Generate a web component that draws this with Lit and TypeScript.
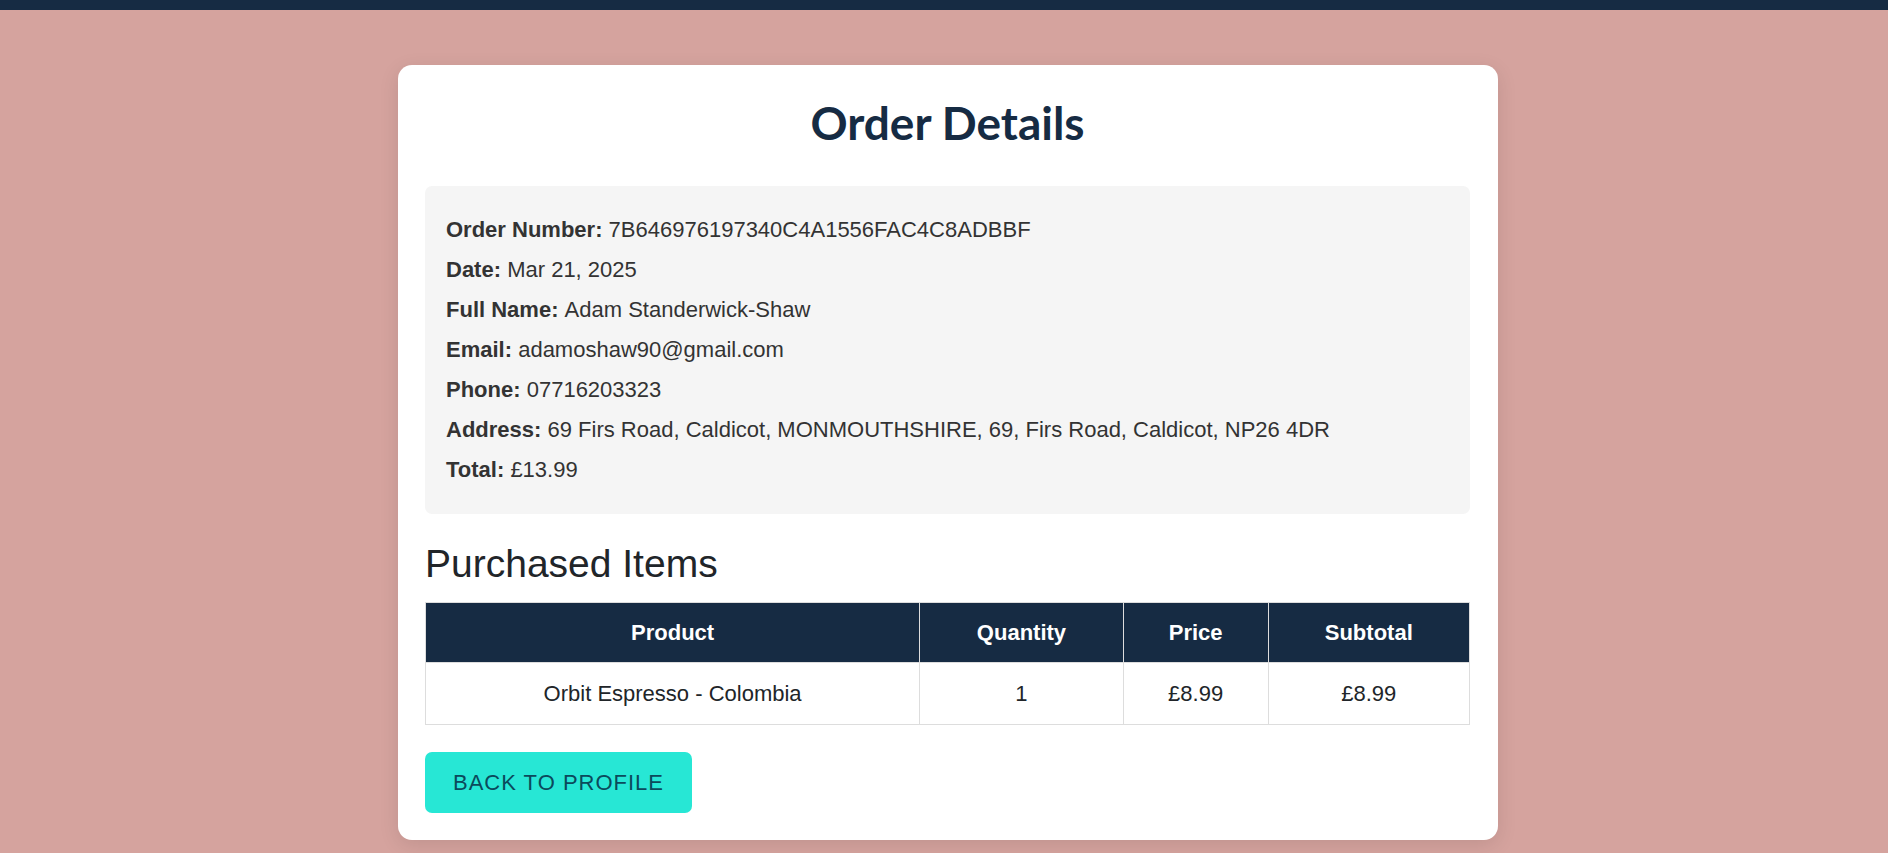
import { LitElement, html, css } from "lit";
import { customElement, property } from "lit/decorators.js";

interface Item {
  product: string;
  quantity: number;
  price: string;
  subtotal: string;
}

@customElement("order-summary")
class OrderSummary extends LitElement {
  @property({ attribute: false }) fields: [string, string][] = [];

  static styles = css`
    :host {
      display: block;
      padding: 24px 21px;
      border-radius: 7px;
      background: #f5f5f5;
      color: #333;
    }
    .list {
      margin: 0;
    }
    .row {
      line-height: 40px;
    }
    .label {
      display: inline;
      font-weight: 700;
    }
    .value {
      display: inline;
      margin: 0;
    }
  `;

  render() {
    return html`<dl class="list">
      ${this.fields.map(
        ([label, value]) =>
          html`<div class="row"><dt class="label">${label}:</dt> <dd class="value">${value}</dd></div>`
      )}
    </dl>`;
  }
}

@customElement("item-table")
class ItemTable extends LitElement {
  @property({ attribute: false }) items: Item[] = [];

  static styles = css`
    :host {
      display: block;
    }
    .table {
      width: 100%;
      border-collapse: collapse;
      text-align: center;
      font-size: inherit;
      line-height: 33px;
    }
    .cell {
      padding: 14px;
      border: 1px solid #ddd;
    }
    .head {
      padding: 13px 14px;
      background: #162b43;
      color: #fff;
      font-weight: 700;
    }
  `;

  render() {
    return html`<table class="table">
      <thead>
        <tr>
          ${["Product", "Quantity", "Price", "Subtotal"].map(
            (name) => html`<th class="cell head" scope="col">${name}</th>`
          )}
        </tr>
      </thead>
      <tbody>
        ${this.items.map(
          (item) => html`<tr>
            <td class="cell">${item.product}</td>
            <td class="cell">${item.quantity}</td>
            <td class="cell">${item.price}</td>
            <td class="cell">${item.subtotal}</td>
          </tr>`
        )}
      </tbody>
    </table>`;
  }
}

@customElement("app-root")
class AppRoot extends LitElement {
  static styles = css`
    :host {
      display: block;
      box-sizing: border-box;
      min-height: 100vh;
      background: #d5a39e;
      color: #212529;
      font-family: "Liberation Sans", Arial, sans-serif;
      font-size: 22px;
      line-height: 33px;
    }
    .bar {
      height: 10px;
      background: #162b43;
    }
    .page {
      padding: 55px 0 13px 8px;
    }
    .card {
      box-sizing: border-box;
      max-width: 1100px;
      margin: 0 auto;
      padding: 27px 28px 27px 27px;
      border-radius: 14px;
      background: #fff;
      box-shadow: 0 5px 20px rgba(0, 0, 0, 0.1);
    }
    .title {
      margin: 0 0 32px;
      color: #162b43;
      font-family: Lato, sans-serif;
      font-size: 46px;
      font-weight: 700;
      line-height: 62px;
      text-align: center;
    }
    .subtitle {
      margin: 27px 0 15px;
      font-size: 39px;
      font-weight: 400;
      line-height: 46px;
    }
    .back {
      display: inline-block;
      margin-top: 27px;
      padding: 14px 28px;
      border-radius: 7px;
      background: #27e7d5;
      color: #0b4a5c;
      letter-spacing: 1px;
      text-decoration: none;
      text-transform: uppercase;
    }
  `;

  private fields: [string, string][] = [
    ["Order Number", "7B646976197340C4A1556FAC4C8ADBBF"],
    ["Date", "Mar 21, 2025"],
    ["Full Name", "Adam Standerwick-Shaw"],
    ["Email", "adamoshaw90@gmail.com"],
    ["Phone", "07716203323"],
    ["Address", "69 Firs Road, Caldicot, MONMOUTHSHIRE, 69, Firs Road, Caldicot, NP26 4DR"],
    ["Total", "£13.99"],
  ];

  private items: Item[] = [
    { product: "Orbit Espresso - Colombia", quantity: 1, price: "£8.99", subtotal: "£8.99" },
  ];

  render() {
    return html`
      <header class="bar"></header>
      <main class="page">
        <section class="card">
          <h1 class="title">Order Details</h1>
          <order-summary .fields=${this.fields}></order-summary>
          <h2 class="subtitle">Purchased Items</h2>
          <item-table .items=${this.items}></item-table>
          <a class="back" href="#profile">Back to Profile</a>
        </section>
      </main>
    `;
  }
}
